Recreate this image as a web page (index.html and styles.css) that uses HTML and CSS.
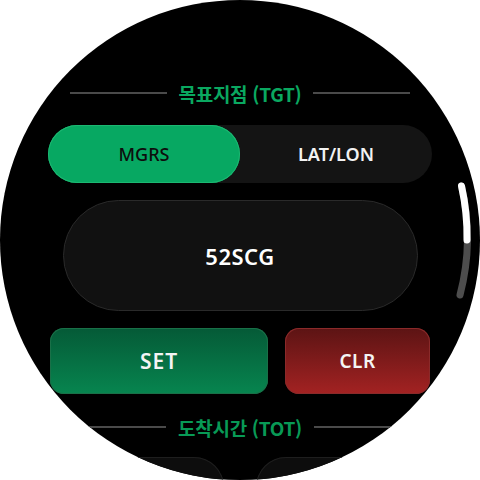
FILE: index.html
```html
<!DOCTYPE html>
<html lang="ko">
<head>
    <meta charset="UTF-8">
    <meta name="viewport" content="width=device-width, initial-scale=1.0">
    <title>목표지점</title>
    <link rel="stylesheet" href="styles.css">
</head>
<body>
    <div class="watch">
        <div class="screen">
            <div class="section-title">
                <span class="rule"></span>
                <span class="label">목표지점 (TGT)</span>
                <span class="rule"></span>
            </div>

            <div class="toggle">
                <div class="toggle-option active">MGRS</div>
                <div class="toggle-option">LAT/LON</div>
            </div>

            <div class="coord-field">52SCG</div>

            <div class="actions">
                <button class="btn btn-set">SET</button>
                <button class="btn btn-clr">CLR</button>
            </div>

            <div class="section-title second">
                <span class="rule"></span>
                <span class="label">도착시간 (TOT)</span>
                <span class="rule"></span>
            </div>

            <div class="time-row">
                <div class="time-card"></div>
                <div class="time-card"></div>
            </div>
        </div>

        <!-- scroll indicator follows the bezel curve -->
        <svg class="scroll" width="480" height="480" viewBox="0 0 480 480">
            <path d="M 461.5 186 A 227 227 0 0 1 460 295" fill="none" stroke="#4d4d4d" stroke-width="7" stroke-linecap="round"/>
            <path d="M 461.5 186 A 227 227 0 0 1 467 240" fill="none" stroke="#ffffff" stroke-width="7" stroke-linecap="round"/>
        </svg>
    </div>
</body>
</html>
```

FILE: styles.css
```css
body {
    margin: 0;
    background: #ffffff;
    font-family: "Noto Sans", "Noto Sans CJK KR", sans-serif;
}
.watch {
    position: relative;
    width: 480px;
    height: 480px;
    border-radius: 50%;
    background: #000000;
    overflow: hidden;
}
.screen {
    display: flex;
    flex-direction: column;
    align-items: center;
    padding-top: 81px;
}
.section-title {
    display: flex;
    align-items: center;
    gap: 12px;
    width: 340px;
    height: 24px;
}
.section-title.second {
    margin-top: 21px;
}
.rule {
    flex: 1;
    height: 2px;
    background: #4a4a4a;
}
.label {
    font-family: "Noto Sans CJK KR", sans-serif;
    font-weight: 700;
    font-size: 19px;
    color: #0aa860;
    letter-spacing: -0.3px;
}
.second .label {
    color: #089a56;
}
.toggle {
    display: flex;
    width: 384px;
    height: 58px;
    margin-top: 20px;
    border-radius: 29px;
    background: #141414;
}
.toggle-option {
    flex: 1;
    display: flex;
    align-items: center;
    justify-content: center;
    border-radius: 29px;
    font-size: 18px;
    font-weight: 600;
    color: #f2f2f2;
}
.toggle-option.active {
    background: #07a862;
    color: #0d0d0d;
    font-weight: 500;
    box-shadow: inset 0 0 0 1px #1cb872;
}
.coord-field {
    display: flex;
    align-items: center;
    justify-content: center;
    box-sizing: border-box;
    width: 355px;
    height: 111px;
    margin-top: 17px;
    border-radius: 56px;
    border: 1px solid #2a2a2a;
    background: #111111;
    color: #ffffff;
    font-size: 22px;
    font-weight: 600;
    letter-spacing: 0.5px;
}
.actions {
    display: flex;
    gap: 17px;
    width: 380px;
    margin-top: 17px;
}
.btn {
    height: 66px;
    border: none;
    border-radius: 14px;
    color: #f4f4f4;
    font-family: "Noto Sans", sans-serif;
    font-weight: 600;
    letter-spacing: 1px;
    cursor: pointer;
}
.btn-set {
    width: 218px;
    font-size: 21px;
    background: linear-gradient(180deg, #055a37 0%, #07854f 100%);
    box-shadow: inset 0 0 0 1px #1a7048;
}
.btn-clr {
    width: 145px;
    font-size: 19px;
    letter-spacing: 0.5px;
    background: linear-gradient(180deg, #5c1414 0%, #a32222 100%);
    box-shadow: inset 0 0 0 1px #8a2a2a;
}
.time-row {
    display: flex;
    gap: 32px;
    margin-top: 18px;
}
.time-card {
    width: 150px;
    height: 80px;
    border-radius: 30px;
    background: #0d0d0d;
    box-shadow: inset 0 0 0 1px #1e1e1e;
}
.scroll {
    position: absolute;
    top: 0;
    left: 0;
}
```
